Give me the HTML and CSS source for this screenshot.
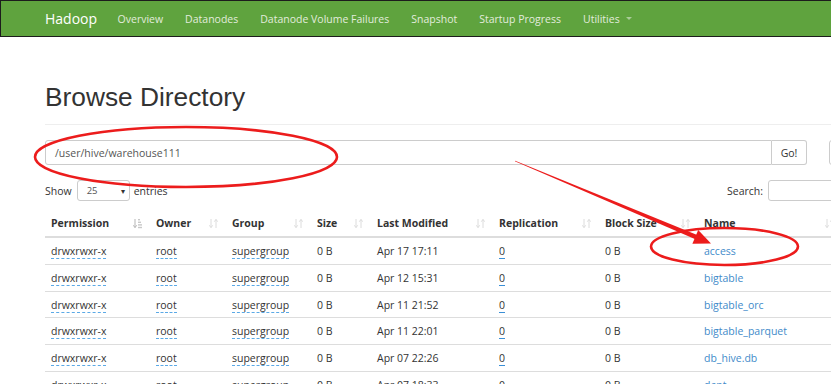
FILE: index.html
```html
<!DOCTYPE html>
<html lang="en">
<head>
<meta charset="utf-8">
<title>Browsing HDFS</title>
<link rel="stylesheet" href="styles.css">
</head>
<body>
<nav class="navbar">
  <div class="nav-inner">
    <a class="brand">Hadoop</a>
    <ul class="nav">
      <li>Overview</li>
      <li>Datanodes</li>
      <li>Datanode Volume Failures</li>
      <li>Snapshot</li>
      <li>Startup Progress</li>
      <li>Utilities <span class="caret"></span></li>
    </ul>
  </div>
</nav>

<main class="container">
  <div class="page-header"><h1>Browse Directory</h1></div>

  <div class="path-row">
    <div class="path-group">
      <div class="path-input">/user/hive/warehouse111</div>
      <div class="go-btn">Go!</div>
    </div>
    <div class="tool-btn"></div>
  </div>

  <div class="controls">
    <div class="length">Show <div class="select"><span>25</span><span class="arrow">&#9662;</span></div> entries</div>
    <div class="filter">Search: <div class="search-input"></div></div>
  </div>

  <table class="table">
    <colgroup>
      <col class="c-perm"><col class="c-owner"><col class="c-group"><col class="c-size"><col class="c-mod"><col class="c-rep"><col class="c-block"><col class="c-name"><col class="c-del">
    </colgroup>
    <thead>
      <tr>
        <th><div class="th-in">Permission<svg class="sort" width="9" height="11" viewBox="0 0 9 11"><path d="M2 1v8.5M0.3 7.3L2 9.6 3.7 7.3" stroke="#b5b5b5" fill="none"/><rect x="5" y="1" width="2" height="1.4" fill="#c8c8c8"/><rect x="5" y="3.6" width="3" height="1.4" fill="#c8c8c8"/><rect x="5" y="6.2" width="4" height="1.4" fill="#c8c8c8"/><rect x="5" y="8.8" width="4" height="1.4" fill="#c8c8c8"/></svg></div></th>
        <th><div class="th-in">Owner<svg class="sort" width="9" height="11" viewBox="0 0 9 11"><path d="M2 1v8.5M0.3 7.3L2 9.6 3.7 7.3M7 10V1.5M5.3 3.7L7 1.4 8.7 3.7" stroke="#dcdcdc" fill="none"/></svg></div></th>
        <th><div class="th-in">Group<svg class="sort" width="9" height="11" viewBox="0 0 9 11"><path d="M2 1v8.5M0.3 7.3L2 9.6 3.7 7.3M7 10V1.5M5.3 3.7L7 1.4 8.7 3.7" stroke="#dcdcdc" fill="none"/></svg></div></th>
        <th><div class="th-in">Size<svg class="sort" width="9" height="11" viewBox="0 0 9 11"><path d="M2 1v8.5M0.3 7.3L2 9.6 3.7 7.3M7 10V1.5M5.3 3.7L7 1.4 8.7 3.7" stroke="#dcdcdc" fill="none"/></svg></div></th>
        <th><div class="th-in">Last Modified<svg class="sort" width="9" height="11" viewBox="0 0 9 11"><path d="M2 1v8.5M0.3 7.3L2 9.6 3.7 7.3M7 10V1.5M5.3 3.7L7 1.4 8.7 3.7" stroke="#dcdcdc" fill="none"/></svg></div></th>
        <th><div class="th-in">Replication<svg class="sort" width="9" height="11" viewBox="0 0 9 11"><path d="M2 1v8.5M0.3 7.3L2 9.6 3.7 7.3M7 10V1.5M5.3 3.7L7 1.4 8.7 3.7" stroke="#dcdcdc" fill="none"/></svg></div></th>
        <th><div class="th-in">Block Size<svg class="sort" width="9" height="11" viewBox="0 0 9 11"><path d="M2 1v8.5M0.3 7.3L2 9.6 3.7 7.3M7 10V1.5M5.3 3.7L7 1.4 8.7 3.7" stroke="#dcdcdc" fill="none"/></svg></div></th>
        <th><div class="th-in">Name<svg class="sort" width="9" height="11" viewBox="0 0 9 11"><path d="M2 1v8.5M0.3 7.3L2 9.6 3.7 7.3M7 10V1.5M5.3 3.7L7 1.4 8.7 3.7" stroke="#dcdcdc" fill="none"/></svg></div></th>
        <th></th>
      </tr>
    </thead>
    <tbody>
      <tr><td><span class="dot">drwxrwxr-x</span></td><td><span class="dot">root</span></td><td><span class="dot">supergroup</span></td><td>0 B</td><td>Apr 17 17:11</td><td><span class="rep">0</span></td><td>0 B</td><td><a class="name">access</a></td><td></td></tr>
      <tr><td><span class="dot">drwxrwxr-x</span></td><td><span class="dot">root</span></td><td><span class="dot">supergroup</span></td><td>0 B</td><td>Apr 12 15:31</td><td><span class="rep">0</span></td><td>0 B</td><td><a class="name">bigtable</a></td><td></td></tr>
      <tr><td><span class="dot">drwxrwxr-x</span></td><td><span class="dot">root</span></td><td><span class="dot">supergroup</span></td><td>0 B</td><td>Apr 11 21:52</td><td><span class="rep">0</span></td><td>0 B</td><td><a class="name">bigtable_orc</a></td><td></td></tr>
      <tr><td><span class="dot">drwxrwxr-x</span></td><td><span class="dot">root</span></td><td><span class="dot">supergroup</span></td><td>0 B</td><td>Apr 11 22:01</td><td><span class="rep">0</span></td><td>0 B</td><td><a class="name">bigtable_parquet</a></td><td></td></tr>
      <tr><td><span class="dot">drwxrwxr-x</span></td><td><span class="dot">root</span></td><td><span class="dot">supergroup</span></td><td>0 B</td><td>Apr 07 22:26</td><td><span class="rep">0</span></td><td>0 B</td><td><a class="name">db_hive.db</a></td><td></td></tr>
      <tr><td><span class="dot">drwxrwxr-x</span></td><td><span class="dot">root</span></td><td><span class="dot">supergroup</span></td><td>0 B</td><td>Apr 07 18:33</td><td><span class="rep">0</span></td><td>0 B</td><td><a class="name">dept</a></td><td></td></tr>
    </tbody>
  </table>
</main>

<svg class="annot" width="831" height="384" viewBox="0 0 831 384">
  <ellipse cx="186" cy="157" rx="151" ry="30" fill="none" stroke="#ec1c1c" stroke-width="2.6"/>
  <ellipse cx="724.5" cy="246.5" rx="73.5" ry="18.5" fill="none" stroke="#ec1c1c" stroke-width="2.6"/>
  <polygon points="514.84,161.37 515.16,160.63 697.2,234.9 695.4,239.2" fill="#ec1c1c"/>
  <polygon points="711,243.5 692.4,243.8 698.2,230" fill="#ec1c1c"/>
</svg>
</body>
</html>
```

FILE: styles.css
```css
* { box-sizing: border-box; }

html, body {
  margin: 0;
  overflow: hidden;
}

body {
  position: relative;
  width: 831px;
  height: 384px;
  background: #fff;
  color: #333;
  font-family: "Open Sans", "Noto Sans", sans-serif;
  font-size: 10.5px;
}

/* Navbar */
.navbar {
  height: 37px;
  background: #5fa33e;
  border: 1px solid #1c1c1c;
  border-right: 0;
}

.nav-inner {
  display: flex;
  align-items: center;
  height: 100%;
  padding-left: 44px;
}

.brand {
  color: #fff;
  font-size: 14px;
  margin-right: 20.5px;
}

.nav {
  display: flex;
  align-items: center;
  gap: 22px;
  list-style: none;
  margin: 0;
  padding: 0;
}

.nav li {
  color: #e2ecdd;
  font-size: 10.5px;
  display: flex;
  align-items: center;
}

.caret {
  display: inline-block;
  margin-left: 6px;
  width: 0;
  height: 0;
  border-top: 3px solid #a9cc98;
  border-left: 3px solid transparent;
  border-right: 3px solid transparent;
}

/* Container */
.container {
  width: 833px;
  margin-left: 45px;
}

.page-header {
  margin-top: 45px;
  padding-bottom: 12px;
  border-bottom: 1px solid #eee;
}

.page-header h1 {
  margin: 0;
  font-family: "Liberation Sans", Arial, sans-serif;
  font-weight: 400;
  font-size: 26.3px;
  line-height: 30px;
  color: #333;
}

/* Path input row */
.path-row {
  display: flex;
  margin-top: 15px;
  height: 25px;
}

.path-group {
  display: flex;
  width: 762px;
}

.path-input {
  flex: 1;
  border: 1px solid #ccc;
  border-radius: 3px 0 0 3px;
  padding: 0 9px;
  display: flex;
  align-items: center;
  color: #555;
}

.go-btn {
  width: 35px;
  border: 1px solid #ccc;
  border-left: 0;
  border-radius: 0 3px 3px 0;
  display: flex;
  align-items: center;
  justify-content: center;
  color: #333;
}

.tool-btn {
  margin-left: 22px;
  width: 30px;
  border: 1px solid #ccc;
  border-radius: 3px;
}

/* Table controls */
.controls {
  display: flex;
  justify-content: space-between;
  align-items: center;
  margin-top: 15px;
  height: 21px;
}

.length, .filter {
  display: flex;
  align-items: center;
}

.select {
  display: flex;
  align-items: center;
  justify-content: space-between;
  width: 53px;
  height: 21px;
  margin: 0 4px 0 5px;
  padding: 0 4px 0 9px;
  border: 1px solid #ccc;
  border-radius: 3px;
  font-size: 9.5px;
  color: #555;
}

.select .arrow {
  font-size: 8px;
  color: #333;
}

.search-input {
  width: 110px;
  height: 21px;
  margin-left: 5px;
  border: 1px solid #ccc;
  border-radius: 3px;
}

/* Table */
.table {
  margin-top: 9px;
  width: 833px;
  table-layout: fixed;
  border-collapse: collapse;
}

.c-perm { width: 105px; }
.c-owner { width: 76px; }
.c-group { width: 85px; }
.c-size { width: 60px; }
.c-mod { width: 122px; }
.c-rep { width: 106px; }
.c-block { width: 99px; }
.c-name { width: 144px; }
.c-del { width: 36px; }

.table th {
  padding: 6px;
  line-height: 14px;
  text-align: left;
  font-weight: 700;
  color: #333;
  border-bottom: 2px solid #ddd;
  white-space: nowrap;
}

.th-in {
  display: flex;
  justify-content: space-between;
  align-items: center;
}

.sort {
  flex: none;
  margin-right: 2px;
}

.table td {
  padding: 7px 6px 5px;
  line-height: 13.75px;
  border-top: 1px solid #ddd;
  white-space: nowrap;
  color: #333;
}

.dot {
  border-bottom: 1px dashed #5aa9e6;
}

.rep {
  border-bottom: 1.5px solid #3a8fd6;
}

.name {
  color: #428bca;
}

/* Annotation overlay */
.annot {
  position: absolute;
  top: 0;
  left: 0;
  pointer-events: none;
}
```
